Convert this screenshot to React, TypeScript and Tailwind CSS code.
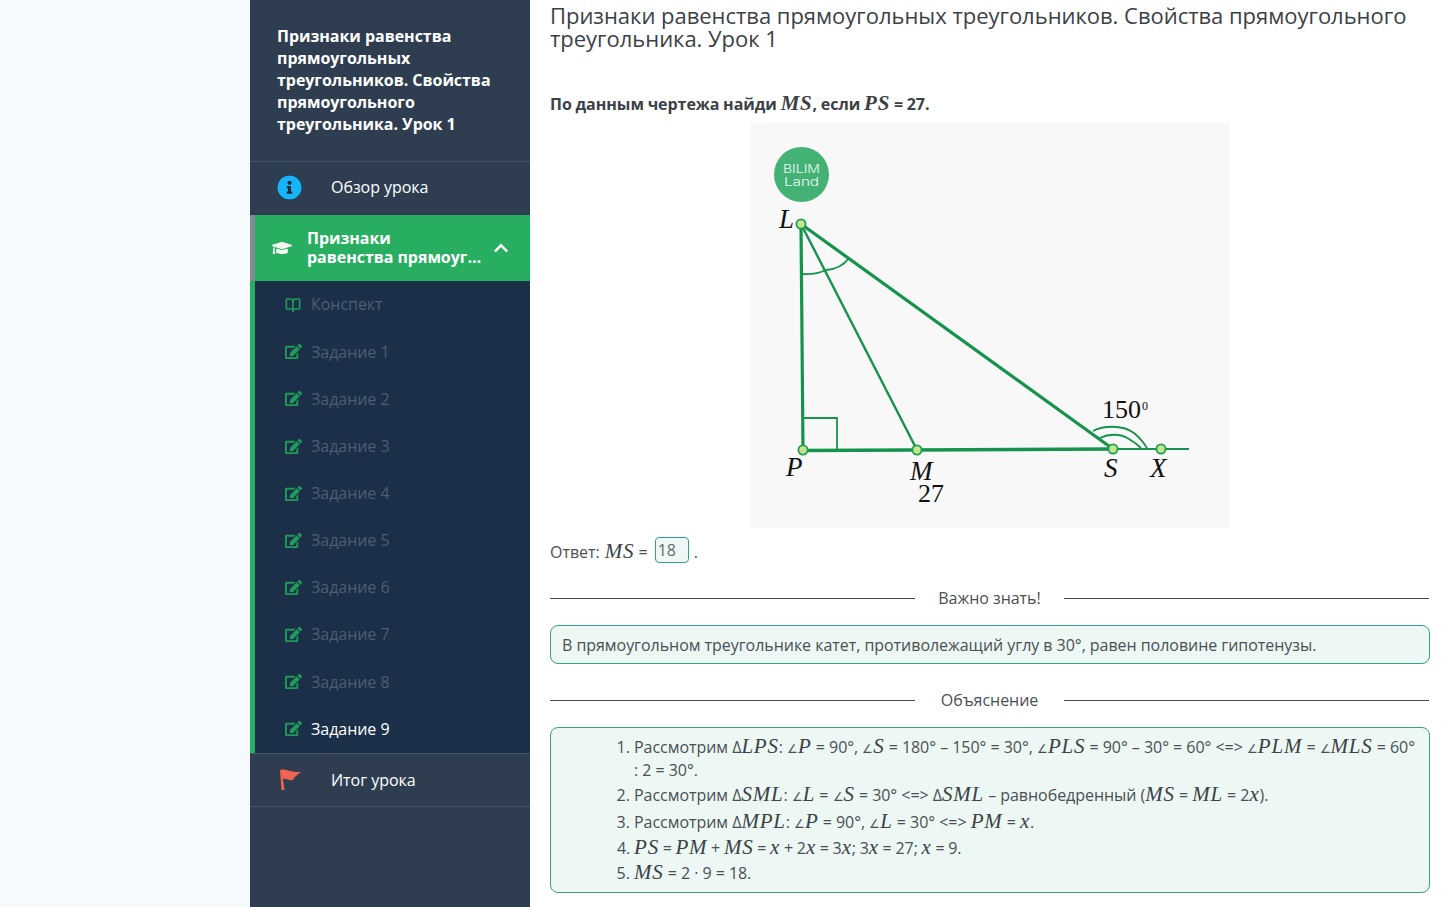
import { BookOpen } from "lucide-react";
import { FaChevronUp, FaEdit, FaGraduationCap, FaInfoCircle } from "react-icons/fa";

const TASKS = ["Конспект", "Задание 1", "Задание 2", "Задание 3", "Задание 4", "Задание 5", "Задание 6", "Задание 7", "Задание 8", "Задание 9"];

function M({ children }: { children: React.ReactNode }) {
  return <i className="font-['Liberation_Serif',serif] text-[21px] tracking-[0.8px] leading-none text-[#3c4146]">{children}</i>;
}

function A() {
  return <span className="text-[12px] leading-none">∠</span>;
}

function Divider({ title }: { title: string }) {
  return (
    <div className="mr-[1px] flex h-[20px] items-center">
      <div className="h-px flex-1 bg-[#44484c]" />
      <div className="w-[149px] text-center text-[16px] text-[#4a4f54]">{title}</div>
      <div className="h-px flex-1 bg-[#44484c]" />
    </div>
  );
}

function Diagram() {
  const green = "#15934c";
  const dots = [[51, 101], [53, 327], [167, 327], [363, 326], [411, 326]];
  return (
    <svg width="480" height="405" viewBox="0 0 480 405" className="block">
      <rect width="480" height="405" fill="#f8f8f8" />
      <circle cx="51.500" cy="51.500" r="27.500" fill="#43b274" />
      <text x="33" y="50" textLength="37" lengthAdjust="spacingAndGlyphs" fill="#eef9f3" fontSize="11" fontFamily="Inter, sans-serif" fontWeight="300">BILIM</text>
      <text x="34" y="63" textLength="35" lengthAdjust="spacingAndGlyphs" fill="#eef9f3" fontSize="11" fontFamily="Inter, sans-serif" fontWeight="300">Land</text>
      <g fill="none" stroke={green}>
        <path d="M51 101 L53 327" strokeWidth="3.200" />
        <path d="M53 327.500 L363 326" strokeWidth="3.400" />
        <path d="M363 326 L439 326" strokeWidth="2" />
        <path d="M51 101 L363 326" strokeWidth="3.200" />
        <path d="M51 101 L167 327" strokeWidth="2.400" />
        <path d="M52 151 Q66 152 76 147" strokeWidth="1.800" />
        <path d="M76 147 Q91 146 99 135" strokeWidth="1.800" />
        <path d="M53 295 H87 V327" strokeWidth="1.800" />
        <path d="M343 308 C352 303 372 301 384 310 C390 315 394 320 397 325" strokeWidth="1.800" />
        <path d="M350 315 C358 311 370 310 379 316 C384 319 388 322 391 325" strokeWidth="1.800" />
      </g>
      {dots.map(([x, y]) => (
        <circle key={x} cx={x} cy={y} r="4.600" fill="#c5e68f" stroke="#1f9e50" strokeWidth="1.800" />
      ))}
      <g fontFamily="'Liberation Serif', serif" fill="#111" fontSize="27">
        <text x="29" y="105" fontStyle="italic">L</text>
        <text x="36" y="353" fontStyle="italic">P</text>
        <text x="160" y="357" fontStyle="italic">M</text>
        <text x="354" y="354" fontStyle="italic">S</text>
        <text x="400" y="354" fontStyle="italic">X</text>
        <text x="168" y="379" fontSize="26">27</text>
        <text x="352" y="295" fontSize="26">150</text>
        <text x="392" y="287" fontSize="12">0</text>
      </g>
    </svg>
  );
}

export default function App() {
  return (
    <div className="flex h-[907px] w-[1441px] overflow-hidden bg-white font-['Open_Sans',sans-serif] text-[16px] tracking-[-0.04px] text-[#4a4f54]">
      <div className="w-[250px] shrink-0 bg-[#f7fafc]" />

      <aside className="w-[280px] shrink-0 bg-[#2e3e50] text-white">
        <div className="h-[162px] border-b border-[#46566a] pl-[27px] pr-[30px] pt-[25px] text-[16px] font-bold leading-[22px]">
          Признаки равенства прямоугольных треугольников. Свойства прямоугольного треугольника. Урок 1
        </div>
        <div className="flex h-[53px] items-center pb-[3px]">
          <FaInfoCircle className="ml-[27px] rounded-full bg-[#1c2b3a] text-[#18b4fa]" size={25} />
          <span className="ml-[29px]">Обзор урока</span>
        </div>
        <div className="flex h-[66px] items-center border-l-[5px] border-[#7f8a99] bg-[#27ae60] font-bold leading-[19px]">
          <FaGraduationCap className="ml-[17px] shrink-0 text-[#f1f7ee]" size={20} />
          <div className="ml-[15px] w-[176px] shrink-0">
            <div>Признаки</div>
            <div className="truncate">равенства прямоугольных</div>
          </div>
          <FaChevronUp className="ml-[10px] text-white" size={16} />
        </div>
        <div className="border-l-[5px] border-[#27ae60] bg-[#1b2f48] pb-[0.300px]">
          {TASKS.map((t, i) => (
            <div key={t} className="flex h-[47.170px] items-center">
              <span className="ml-[30px] flex w-[26px] shrink-0 text-[#209a58]">
                {i === 0 ? <BookOpen size={16} strokeWidth={2.500} /> : <FaEdit size={17} />}
              </span>
              <span className={i === 9 ? "pb-[0.400px] text-white" : "pb-[0.400px] text-[#4e5d70]"}>{t}</span>
            </div>
          ))}
        </div>
        <div className="flex h-[54px] items-center border-y border-[#46566a]">
          <svg width="24" height="22" viewBox="0 0 24 22" className="ml-[28px] shrink-0">
            <path d="M2 1 C7 -1 10 3 23 3 C19 6 16 8 15 11 C11 12 8 9 5 10 L6.500 21 L3.500 21 Z" fill="#ee6352" />
          </svg>
          <span className="ml-[29px]">Итог урока</span>
        </div>
      </aside>

      <main className="flex-1 pl-[20px] pr-[11px] pt-[4px]">
        <h1 className="text-[22px] font-normal leading-[23px] tracking-[-0.03px] text-[#3c4146]">
          Признаки равенства прямоугольных треугольников. Свойства прямоугольного треугольника. Урок 1
        </h1>
        <p className="mt-[42px] h-[27px] font-bold leading-[24px] text-[#3c4146] [word-spacing:-0.350px]">
          По данным чертежа найди <M>MS</M>, если <M>PS</M> = 27.
        </p>
        <div className="mt-[4px] flex justify-center">
          <Diagram />
        </div>
        <div className="mt-[11px] flex h-[26px] items-center">
          <span>Ответ:&nbsp;</span>
          <span className="ml-[1px]"><M>MS</M></span>
          <span>&nbsp;=&nbsp;</span>
          <span className="mb-[4px] ml-[3px] flex h-[26px] w-[34px] items-center rounded-[4px] border border-[#34a08c] bg-[#eef8f5] pl-[2px] text-[#63686d]">18</span>
          <span className="ml-[5px]">.</span>
        </div>
        <div className="mt-[23px]">
          <Divider title="Важно знать!" />
        </div>
        <div className="mt-[17px] flex h-[39px] items-center rounded-[8px] border border-[#3aa08a] bg-[#edf8f4] pl-[11px]">
          В прямоугольном треугольнике катет, противолежащий углу в 30°, равен половине гипотенузы.
        </div>
        <div className="mt-[26px]">
          <Divider title="Объяснение" />
        </div>
        <div className="mt-[17px] h-[166px] rounded-[8px] border border-[#3aa08a] bg-[#edf8f4] pl-[83px] pr-[8px] pt-[8px]">
          <ol className="list-decimal leading-[23px]">
            <li className="mb-[2px]">
              Рассмотрим Δ<M>LPS</M>: <A /><M>P</M> = 90°, <A /><M>S</M> = 180° – 150° = 30°, <A /><M>PLS</M> = 90° – 30° = 60° &lt;=&gt; <A /><M>PLM</M> = <A /><M>MLS</M> = 60° : 2 = 30°.
            </li>
            <li className="mb-[4px]">
              Рассмотрим Δ<M>SML</M>: <A /><M>L</M> = <A /><M>S</M> = 30° &lt;=&gt; Δ<M>SML</M> – равнобедренный (<M>MS</M> = <M>ML</M> = 2<M>x</M>).
            </li>
            <li className="mb-[3px]">
              Рассмотрим Δ<M>MPL</M>: <A /><M>P</M> = 90°, <A /><M>L</M> = 30° &lt;=&gt; <M>PM</M> = <M>x</M>.
            </li>
            <li className="mb-[2px] [word-spacing:-0.400px]">
              <M>PS</M> = <M>PM</M> + <M>MS</M> = <M>x</M> + 2<M>x</M> = 3<M>x</M>; 3<M>x</M> = 27; <M>x</M> = 9.
            </li>
            <li>
              <M>MS</M> = 2 · 9 = 18.
            </li>
          </ol>
        </div>
      </main>
    </div>
  );
}
